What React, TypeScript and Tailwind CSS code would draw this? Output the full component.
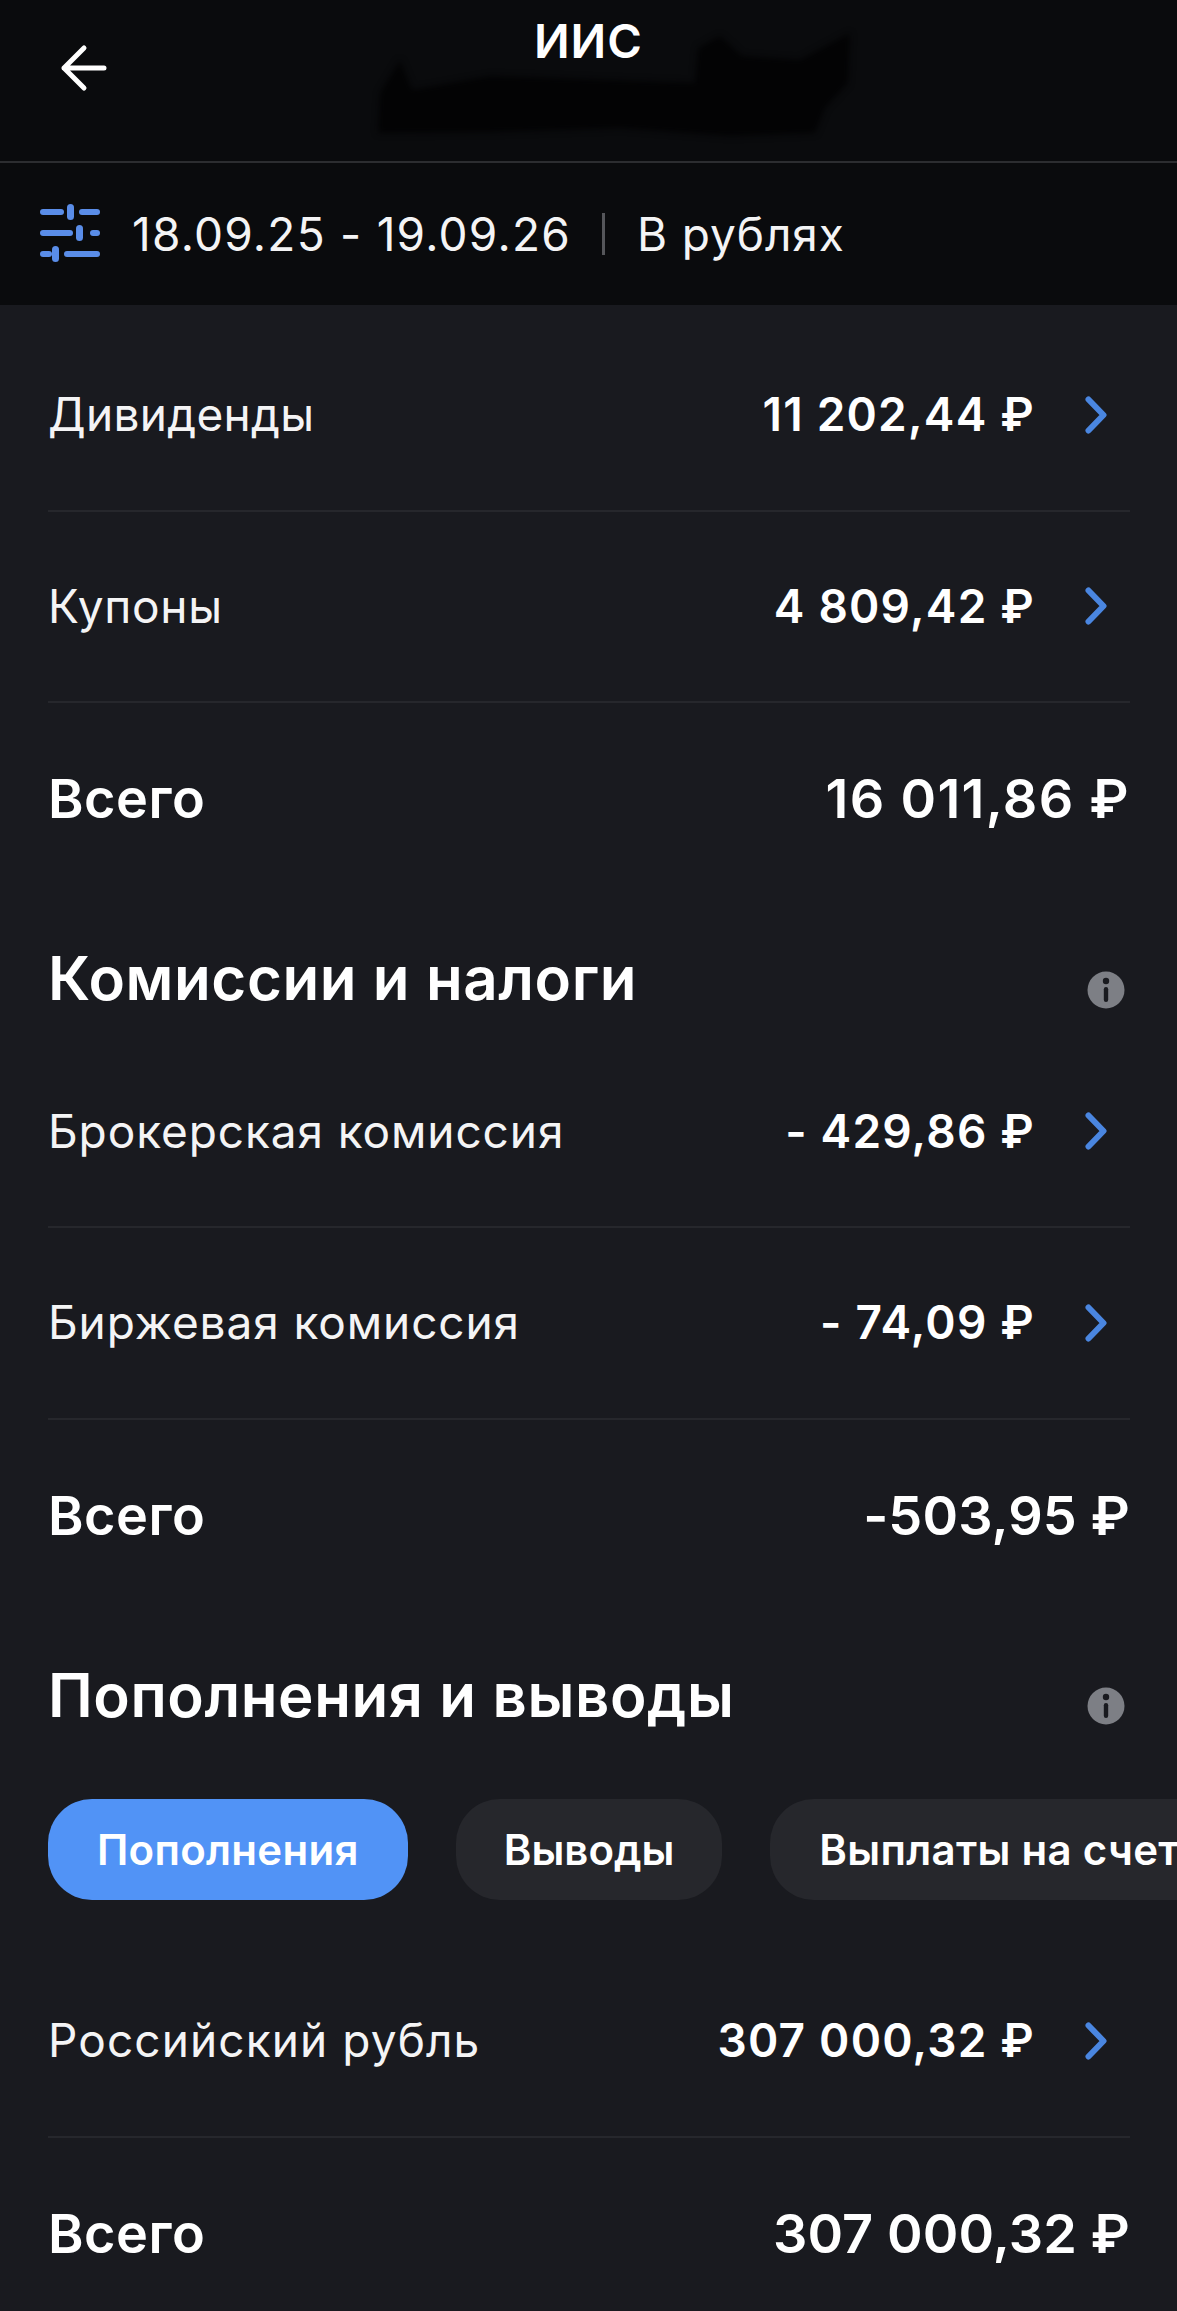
const font = "[font-family:Inter,'Noto_Sans',sans-serif]";

function Chevron() {
  return (
    <svg width="22" height="38" viewBox="0 0 22 38" fill="none" className="ml-[50px] mr-[23px] shrink-0">
      <path d="M3.5 3.5 L18.5 19 L3.5 34.5" stroke="#4a86e0" strokeWidth="6" strokeLinecap="round" strokeLinejoin="round" />
    </svg>
  );
}

function Row({ label, value, spacing = "tracking-[0.9px]" }: { label: string; value: string; spacing?: string }) {
  return (
    <div className="flex h-[191.5px] items-center border-b-2 border-[#26272c]">
      <span className={`flex-1 text-[46px] text-[#f4f4f5] ${spacing}`}>{label}</span>
      <span className="text-[46px] font-semibold tracking-[1.2px] text-white">{value}</span>
      <Chevron />
    </div>
  );
}

function Total({ value, spacing = "tracking-[0.1px]" }: { value: string; spacing?: string }) {
  return (
    <div className="flex h-[191.5px] items-center justify-between">
      <span className="text-[54px] font-semibold tracking-[0.5px] text-white">Всего</span>
      <span className={`text-[54px] font-semibold text-white ${spacing}`}>{value}</span>
    </div>
  );
}

function Heading({ title }: { title: string }) {
  return (
    <div className="flex h-[142px] items-center justify-between pt-[48px]">
      <h2 className="mb-[23px] text-[60px] font-semibold tracking-[0.6px] text-white">{title}</h2>
      <svg width="38" height="38" viewBox="0 0 38 38" className="mr-[5px] shrink-0">
        <circle cx="19" cy="19" r="18.5" fill="#7d7f85" />
        <circle cx="19" cy="10" r="3.2" fill="#191a1f" />
        <rect x="16.8" y="16" width="4.4" height="15" rx="2.2" fill="#191a1f" />
      </svg>
    </div>
  );
}

export default function App() {
  return (
    <div className={`${font} min-h-[2311px] w-[1177px] overflow-hidden bg-[#191a1f] text-white`}>
      {/* Top bar */}
      <header className="relative h-[163px] border-b-2 border-[#2c2d30] bg-[#0a0b0d]">
        <div className="flex items-start">
          <svg width="60" height="56" viewBox="0 0 60 56" fill="none" className="ml-[54px] mt-[40px]">
            <path d="M50 28 H10 M30 8 L10 28 L30 48" stroke="#fff" strokeWidth="5" strokeLinecap="round" strokeLinejoin="round" />
          </svg>
          <div className="ml-[420px] mt-[13px] text-[47px] font-semibold leading-[56px] tracking-[0.9px]">ИИС</div>
        </div>
        {/* закрашенный номер счёта */}
        <svg width="490" height="115" viewBox="0 0 490 115" className="absolute left-[370px] top-[28px] blur-[3px]">
          <path d="M8 105 L10 65 L30 32 L42 62 L120 48 L325 55 L328 20 L350 8 L372 28 L430 32 L480 5 L478 55 L455 80 L445 105 L360 108 L250 100 L120 104 Z" fill="#030304" />
        </svg>
      </header>

      {/* Filter bar */}
      <div className="flex h-[142px] items-center bg-[#0a0b0d] pl-[40px]">
        <svg width="60" height="58" viewBox="0 0 60 58" fill="#5a8de8" className="mb-[2px] shrink-0">
          <rect x="0" y="5" width="24" height="6" rx="3" />
          <rect x="27" y="0" width="7" height="16" rx="3.5" />
          <rect x="39" y="5" width="21" height="6" rx="3" />
          <rect x="0" y="26" width="33" height="6" rx="3" />
          <rect x="36" y="21" width="7" height="16" rx="3.5" />
          <rect x="50" y="26" width="10" height="6" rx="3" />
          <rect x="0" y="47" width="12" height="6" rx="3" />
          <rect x="12" y="42" width="7" height="16" rx="3.5" />
          <rect x="24" y="47" width="36" height="6" rx="3" />
        </svg>
        <span className="ml-[32px] text-[46px] tracking-[1.25px] text-[#f4f4f5]">18.09.25 - 19.09.26</span>
        <span className="ml-[31px] mr-[32px] h-[42px] w-[3px] bg-[#55565a]" />
        <span className="text-[46px] tracking-[0.9px] text-[#f4f4f5]">В рублях</span>
      </div>

      <main className="pl-[48px] pr-[47px] pt-[15px]">
        <Row label="Дивиденды" value="11 202,44 ₽" spacing="tracking-[0.3px]" />
        <Row label="Купоны" value="4 809,42 ₽" spacing="tracking-[0.7px]" />
        <Total value="16 011,86 ₽" spacing="tracking-[1.3px]" />

        <Heading title="Комиссии и налоги" />
        <Row label="Брокерская комиссия" value="- 429,86 ₽" />
        <Row label="Биржевая комиссия" value="- 74,09 ₽" />
        <Total value="-503,95 ₽" />

        <Heading title="Пополнения и выводы" />
        <div className="mt-[46px] flex w-[1200px] gap-[48px]">
          <button className="h-[101px] rounded-[44px] bg-[#5193f6] px-[49px] text-[42px] font-semibold tracking-[0.3px] text-white">Пополнения</button>
          <button className="h-[101px] rounded-[44px] bg-[#26272c] px-[48px] text-[42px] font-semibold text-white">Выводы</button>
          <button className="h-[101px] whitespace-nowrap rounded-[44px] bg-[#26272c] px-[49px] text-[42px] font-semibold tracking-[0.3px] text-white">Выплаты на счет</button>
        </div>
        <div className="mt-[46px]">
          <Row label="Российский рубль" value="307 000,32 ₽" spacing="tracking-[1.1px]" />
          <Total value="307 000,32 ₽" />
        </div>
      </main>
    </div>
  );
}
